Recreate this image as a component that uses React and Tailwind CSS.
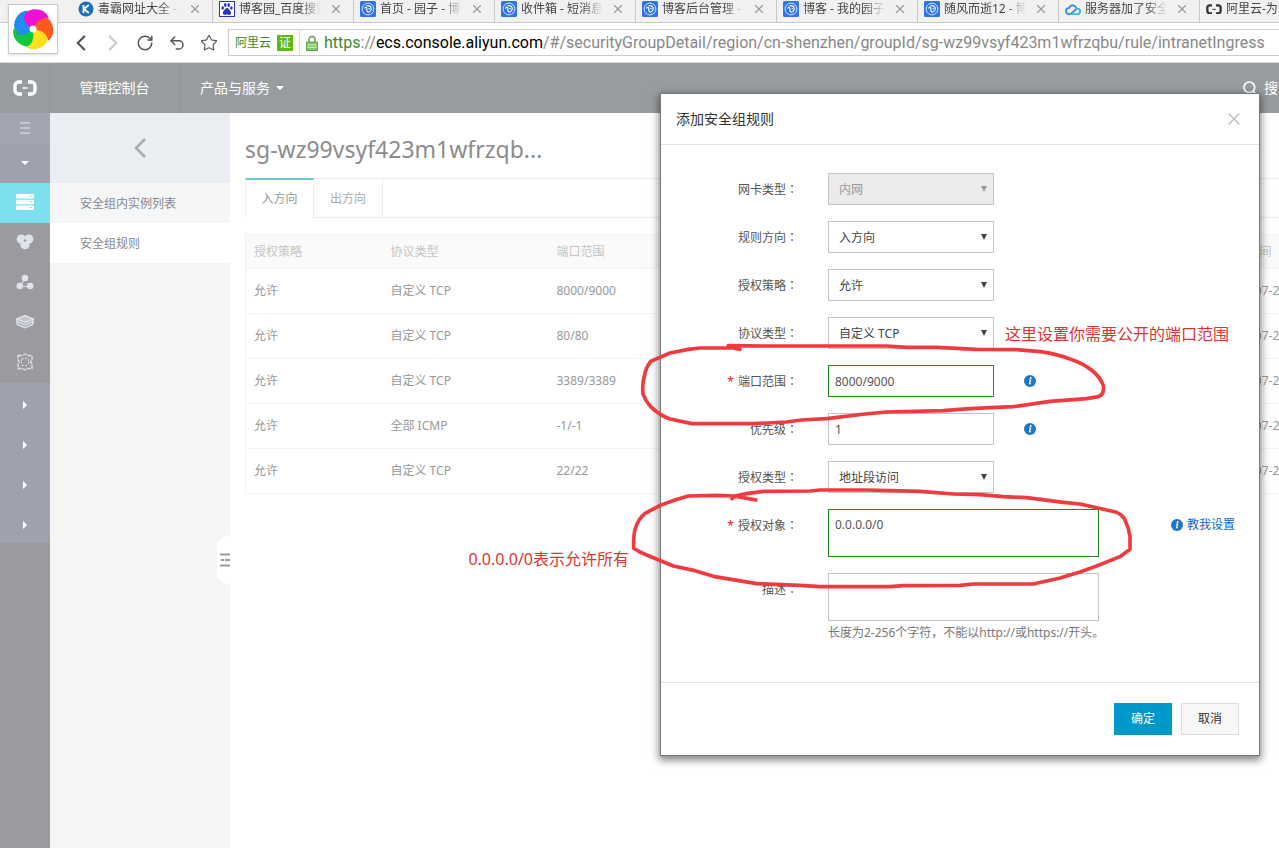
import { ChevronLeft, ChevronRight, RotateCw, Search, Star, Undo2, X } from "lucide-react";

const RULES = [
  { policy: "允许", protocol: "自定义 TCP", port: "8000/9000", created: "2017-07-27" },
  { policy: "允许", protocol: "自定义 TCP", port: "80/80", created: "2017-07-27" },
  { policy: "允许", protocol: "自定义 TCP", port: "3389/3389", created: "2017-07-27" },
  { policy: "允许", protocol: "全部 ICMP", port: "-1/-1", created: "2017-07-27" },
  { policy: "允许", protocol: "自定义 TCP", port: "22/22", created: "2017-07-27" },
];

const TABS = [
  { title: "毒霸网址大全 -", Icon: DubaIcon },
  { title: "博客园_百度搜索", Icon: BaiduIcon },
  { title: "首页 - 园子 - 博", Icon: BlogIcon },
  { title: "收件箱 - 短消息", Icon: BlogIcon },
  { title: "博客后台管理 -", Icon: BlogIcon },
  { title: "博客 - 我的园子", Icon: BlogIcon },
  { title: "随风而逝12 - 博", Icon: BlogIcon },
  { title: "服务器加了安全", Icon: CloudIcon },
  { title: "阿里云-为了", Icon: AliyunTabIcon },
];

function DubaIcon() {
  return (
    <svg viewBox="0 0 16 16" className="size-4 shrink-0">
      <circle cx="8" cy="8" r="7.5" fill="#1c6fbe" />
      <path d="M5.5 4v8M10.8 4 6 8l4.8 4" stroke="#fff" strokeWidth="1.8" fill="none" />
    </svg>
  );
}

function BaiduIcon() {
  return (
    <svg viewBox="0 0 16 16" className="size-4 shrink-0">
      <rect x=".5" y=".5" width="15" height="15" fill="#fff" stroke="#2a35c4" />
      <g fill="#2a35c4">
        <ellipse cx="3.7" cy="7" rx="1.3" ry="1.8" />
        <ellipse cx="6.3" cy="4" rx="1.3" ry="1.9" />
        <ellipse cx="9.7" cy="4" rx="1.3" ry="1.9" />
        <ellipse cx="12.4" cy="7" rx="1.3" ry="1.8" />
        <path d="M8 7c-1.6 0-2 1.5-3 2.5S3 13.5 5.2 13.7c1 .1 1.8-.3 2.8-.3s1.8.4 2.8.3c2.2-.2 1.2-3.2.2-4.2S9.600 7 8 7z" />
      </g>
    </svg>
  );
}

function BlogIcon() {
  return (
    <svg viewBox="0 0 16 16" className="size-4 shrink-0">
      <rect width="16" height="16" rx="1.5" fill="#2f74ea" />
      <circle cx="8" cy="8" r="5.9" fill="none" stroke="#d6e6ff" strokeWidth="1" />
      <path d="M4.500 7.500C5.500 5.500 7 6 6.800 8S7.500 11.500 9 11M6.500 4.800c3-.8 5 1 4.700 3.500-.2 1.500-1 2.400-2.200 2.700M8.500 7.500l1.300.3" stroke="#fff" strokeWidth="1.2" fill="none" />
    </svg>
  );
}

function CloudIcon() {
  return (
    <svg viewBox="0 0 16 16" className="size-4 shrink-0" fill="none" strokeWidth="1.7" strokeLinecap="round">
      <path d="M11 6.500A3.600 3.600 0 0 0 4.200 7 3.100 3.100 0 0 0 4 13.200c1 0 1.600-.2 2.300-.8L11.500 8" stroke="#2f7de0" />
      <path d="M6 13.200h6a2.800 2.800 0 0 0 .6-5.600c-.6-.1-1.200.1-1.700.5" stroke="#35b4e8" />
    </svg>
  );
}

function AliyunLogo({ className }) {
  return (
    <svg viewBox="0 0 24 16" className={className} fill="none" stroke="currentColor">
      <path d="M9 2H5.500A3.700 3.700 0 0 0 2 5.700v4.600A3.700 3.700 0 0 0 5.500 14H9M15 2h3.500A3.700 3.700 0 0 1 22 5.700v4.600a3.700 3.700 0 0 1-3.500 3.700H15" strokeWidth="3.4" />
      <path d="M9.500 8h5" strokeWidth="1.5" />
    </svg>
  );
}

function AliyunTabIcon() {
  return <AliyunLogo className="w-4 shrink-0 text-[#333]" />;
}

const PETALS = [
  { color: "#1e8cf0", angle: 288 },
  { color: "#12c83c", angle: 216 },
  { color: "#ffe01e", angle: 144 },
  { color: "#ff5a1e", angle: 72 },
  { color: "#f010d2", angle: 0 },
];

function BrowserLogo() {
  return (
    <div className="absolute top-1 left-2 flex size-[50px] items-center justify-center border border-[#ccc] bg-white shadow-sm">
      <svg viewBox="-22 -22 44 44" className="size-11">
        {PETALS.map((p) => (
          <path
            key={p.color}
            d="M0 0C-9-4-12-13-5-18C3-22 13-19 16-11C9-12 4-8 0 0z"
            fill={p.color}
            transform={`rotate(${p.angle})`}
          />
        ))}
        <path d="M0 0C-9-4-12-13-9-15C-6-10-3-5 0 0z" fill="#1e8cf0" transform="rotate(288)" />
        <circle r="3.5" fill="#fff" />
      </svg>
    </div>
  );
}

function ToolButton({ label, className, children }) {
  return (
    <button type="button" aria-label={label} className={`flex w-8 justify-center ${className || ""}`}>
      {children}
    </button>
  );
}

function BrowserChrome() {
  return (
    <div className="relative shrink-0">
      <div className="flex h-[23px] overflow-hidden border-b border-[#c8c8c8] bg-[#f1f1f1] pl-[72px]">
        {TABS.map(({ title, Icon }) => (
          <div
            key={title}
            className="flex h-full w-[141px] shrink-0 items-center gap-1 border-r border-[#c8c8c8] pr-2.5 pb-1 pl-1.5"
          >
            <Icon />
            <span className="min-w-0 flex-1 overflow-hidden mask-r-from-75% text-xs leading-[18px] whitespace-nowrap text-[#444]">
              {title}
            </span>
            <button type="button" aria-label="关闭标签页" className="ml-1 text-[#999]">
              <X size={14} />
            </button>
          </div>
        ))}
      </div>

      <div className="flex h-10 items-center border-b border-[#ddd] bg-white pl-[65px] text-[#555]">
        <div className="flex w-[163px] shrink-0 items-center">
          <ToolButton label="后退"><ChevronLeft size={26} /></ToolButton>
          <ToolButton label="前进" className="text-[#ccc]"><ChevronRight size={26} /></ToolButton>
          <ToolButton label="刷新"><RotateCw size={18} /></ToolButton>
          <ToolButton label="恢复"><Undo2 size={18} /></ToolButton>
          <ToolButton label="收藏"><Star size={18} strokeWidth={1.5} /></ToolButton>
        </div>
        <div className="flex h-[27px] min-w-0 flex-1 items-center overflow-hidden border border-r-0 border-[#ccc]">
          <div className="flex h-full shrink-0 items-center gap-1.5 border-r border-[#ddd] px-1.5 text-xs text-[#3c8a2e]">
            阿里云
            <span className="flex size-4 items-center justify-center bg-[#5fb910] text-xs text-white">证</span>
          </div>
          <svg viewBox="0 0 12 16" className="mx-1.5 h-4 w-3 shrink-0">
            <path d="M3 8V4.500a3 3 0 0 1 6 0V8" fill="none" stroke="#8ba37e" strokeWidth="1.8" />
            <rect x=".5" y="7" width="11" height="8.5" fill="#86c96a" stroke="#5da544" />
            <path d="M1 10h10M1 12.500h10" stroke="#c5e8b5" />
          </svg>
          <p className="font-['Roboto','Noto_Sans',sans-serif] text-base leading-6 whitespace-nowrap text-[#888]">
            <span className="text-[#3c8a2e]">https</span>://
            <span className="text-black">ecs.console.aliyun.com</span>
            /#/securityGroupDetail/region/cn-shenzhen/groupId/sg-wz99vsyf423m1wfrzqbu/rule/intranetIngress
          </p>
        </div>
      </div>
      <BrowserLogo />
    </div>
  );
}

function ConsoleHeader() {
  return (
    <header className="flex h-[50px] shrink-0 items-center bg-[#999c9f] text-sm text-white">
      <a href="#home" aria-label="阿里云" className="flex h-full w-[50px] items-center justify-center border-r border-[#93969a]">
        <AliyunLogo className="w-6" />
      </a>
      <a href="#console" className="flex h-full w-[130px] items-center justify-center border-r border-[#93969a]">
        管理控制台
      </a>
      <button type="button" className="flex h-full items-center gap-1.5 px-5">
        产品与服务
        <svg viewBox="0 0 8 4" className="h-1 w-2"><path d="M0 0h8L4 4z" fill="currentColor" /></svg>
      </button>
      <button type="button" className="ml-auto flex w-[37px] items-center gap-1.5 overflow-hidden whitespace-nowrap">
        <Search size={16} strokeWidth={2.5} className="shrink-0" />
        搜索
      </button>
    </header>
  );
}

function ServerIcon() {
  return (
    <svg viewBox="0 0 18 18" className="size-[18px]">
      <g fill="#fff">
        <rect y="1" width="18" height="4.5" rx="1" />
        <rect y="6.7" width="18" height="4.5" rx="1" />
        <rect y="12.4" width="18" height="4.5" rx="1" />
      </g>
      <path d="M14 3.200h2M14 9h2M14 14.700h2" stroke="#7ddcec" />
    </svg>
  );
}

function RdsIcon() {
  return (
    <svg viewBox="0 0 18 18" className="size-[18px]" fill="#dfe2ea">
      <circle cx="5.2" cy="6" r="4.6" />
      <circle cx="12.8" cy="6" r="4.6" />
      <circle cx="9" cy="11.5" r="4.8" />
      <circle cx="9" cy="7.5" r="1.2" fill="#9a9b9e" />
    </svg>
  );
}

function BalanceIcon() {
  return (
    <svg viewBox="0 0 18 18" className="size-[18px]" fill="#dfe2ea">
      <path d="M9 5 5 12M4 13.500h10" stroke="#dfe2ea" strokeWidth="1.2" />
      <circle cx="9" cy="5" r="3.3" />
      <circle cx="3.8" cy="13" r="3.3" />
      <circle cx="14.2" cy="13" r="3.3" />
    </svg>
  );
}

function StorageIcon() {
  return (
    <svg viewBox="0 0 18 18" className="size-[18px]" fill="none" stroke="#dfe2ea" strokeWidth="1.5">
      <path d="M1 6l8-3.500L17 6 9 9.500z" fill="#dfe2ea" fillOpacity=".6" />
      <path d="M1 8.500 9 12l8-3.500M1 11.200l8 3.500 8-3.500M1 6v5.200M17 6v5.200" />
    </svg>
  );
}

function ConfigIcon() {
  return (
    <svg viewBox="0 0 18 18" className="size-[18px]" fill="none" stroke="#dfe2ea" strokeWidth="1.4">
      <path d="M2 2.500h4.500L9 1l2.500 1.500H16V7l-1.500 2L16 11v4.500h-4.500L9 17l-2.500-1.500H2V11l1.500-2L2 7z" strokeDasharray="4 1" />
      <path d="M6 5.500h6M6 12.500h6M5.500 6v6M12.500 6v6" strokeWidth="1" strokeDasharray="2 1" />
    </svg>
  );
}

const PRODUCTS = [
  { name: "云数据库", Icon: RdsIcon },
  { name: "负载均衡", Icon: BalanceIcon },
  { name: "对象存储", Icon: StorageIcon },
  { name: "系统配置", Icon: ConfigIcon },
];

const GROUPS = ["用户中心", "安全", "监控", "运维"];

function ProductRail() {
  return (
    <nav aria-label="产品" className="flex w-[50px] shrink-0 flex-col bg-[#9b9a9e] text-white">
      <button type="button" aria-label="展开菜单" className="flex h-[30px] items-center justify-center bg-[#a3a5b0]">
        <svg viewBox="0 0 10 12" className="h-3 w-2.5"><path d="M0 1h10M0 6h10M0 11h10" stroke="#e8e9ee" /></svg>
      </button>
      <button type="button" aria-label="产品列表" className="flex h-10 items-center justify-center bg-[#9fa2ae]">
        <svg viewBox="0 0 8 4" className="h-1 w-2"><path d="M0 0h8L4 4z" fill="currentColor" /></svg>
      </button>
      <a href="#ecs" aria-label="云服务器" className="flex h-10 items-center justify-center bg-[#7de0ee] pb-0.5">
        <ServerIcon />
      </a>
      {PRODUCTS.map(({ name, Icon }) => (
        <a key={name} href="#product" aria-label={name} className="flex h-10 items-center justify-center pb-0.5">
          <Icon />
        </a>
      ))}
      {GROUPS.map((name) => (
        <button key={name} type="button" aria-label={name} className="flex h-10 items-center justify-center bg-[#9fa2ae] pt-1">
          <svg viewBox="0 0 4 8" className="h-2 w-1"><path d="M0 0l4 4-4 4z" fill="currentColor" /></svg>
        </button>
      ))}
    </nav>
  );
}

function SideMenu() {
  return (
    <aside className="relative w-[180px] shrink-0 bg-[#f5f5f5] text-xs text-[#888]">
      <button type="button" aria-label="返回" className="flex h-[70px] w-full items-center justify-center bg-[#eaedf1] text-[#aaa]">
        <svg viewBox="0 0 12 20" className="h-5 w-3"><path d="M11 1 2 10l9 9" fill="none" stroke="currentColor" strokeWidth="2.5" /></svg>
      </button>
      <a href="#instances" className="flex h-10 items-center bg-[#f4f6f8] pt-0.5 pl-[30px]">安全组内实例列表</a>
      <a href="#rules" className="flex h-10 items-center bg-white pt-0.5 pl-[30px]">安全组规则</a>
      <button
        type="button"
        aria-label="收起"
        className="absolute top-[422px] right-0 flex h-[50px] w-[13px] items-center justify-end rounded-l-full bg-white"
      >
        <svg viewBox="0 0 10 14" className="h-3.5 w-2.5"><path d="M0 1.500h10M0 12.500h10M1 7h3M5 7h5" stroke="#999" strokeWidth="1.8" /></svg>
      </button>
    </aside>
  );
}

function RulesPage() {
  return (
    <main className="min-w-0 flex-1 overflow-hidden pl-[15px] text-xs text-[#999]">
      <h1 className="flex h-[65px] items-center pt-2 text-[23px] text-[#8c8c8c]">sg-wz99vsyf423m1wfrzqb...</h1>
      <div role="tablist" className="flex h-10 border-t border-b border-[#eee]">
        <button
          role="tab"
          aria-selected="true"
          type="button"
          className="-my-px w-[69px] border-t-2 border-r border-l border-t-[#6cc5d0] border-r-[#eee] border-l-[#eee] bg-white"
        >
          入方向
        </button>
        <button role="tab" aria-selected="false" type="button" className="w-[69px] border-r border-[#eee] pt-0.5 text-[#aaa]">
          出方向
        </button>
      </div>

      <table className="mt-4 w-[1100px] table-fixed border border-[#f3f3f3] text-left">
        <thead className="bg-[#fafafa] text-[#c4c4c4]">
          <tr className="h-[34px]">
            <th className="w-[137px] px-2 font-normal">授权策略</th>
            <th className="w-[166px] px-2 font-normal">协议类型</th>
            <th className="w-[667px] px-2 font-normal">端口范围</th>
            <th className="px-2 font-normal">创建时间</th>
          </tr>
        </thead>
        <tbody>
          {RULES.map((rule) => (
            <tr key={rule.port} className="h-[45px] border-t border-[#f3f3f3]">
              <td className="px-2">{rule.policy}</td>
              <td className="px-2">{rule.protocol}</td>
              <td className="px-2">{rule.port}</td>
              <td className="px-2">{rule.created}</td>
            </tr>
          ))}
        </tbody>
      </table>
    </main>
  );
}

function Row({ id, label, required, children }) {
  return (
    <div className="mb-4 flex items-start gap-[30px]">
      <label htmlFor={id} className="h-8 w-[137px] shrink-0 text-right leading-8 text-[#555]">
        {required && <span className="mr-1 text-[#e02020]">*</span>}
        {label}
        <span className="font-['Noto_Sans_CJK_TC',sans-serif]">：</span>
      </label>
      {children}
    </div>
  );
}

function SelectRow({ id, label, value, disabled }) {
  return (
    <Row id={id} label={label}>
      <div className={`relative ${disabled ? "text-[#999]" : "text-[#444]"}`}>
        <select
          id={id}
          disabled={disabled}
          className="block h-8 w-[166px] appearance-none border border-[#c4c4c4] bg-white pt-0.5 pl-2.5 disabled:bg-[#ebebeb]"
        >
          <option>{value}</option>
        </select>
        <svg viewBox="0 0 6 6" className="pointer-events-none absolute top-[13px] right-[7px] size-1.5">
          <path d="M0 0h6L3 6z" fill="currentColor" />
        </svg>
      </div>
    </Row>
  );
}

function InfoIcon() {
  return (
    <svg viewBox="0 0 12 12" className="size-3 shrink-0">
      <circle cx="6" cy="6" r="6" fill="#2077c8" />
      <path d="M5 5h1.600l-1 3.600h1.200" fill="none" stroke="#fff" strokeWidth="1.2" />
      <circle cx="6.7" cy="3" r=".9" fill="#fff" />
    </svg>
  );
}

function RuleDialog() {
  return (
    <div
      role="dialog"
      aria-labelledby="dialog-title"
      className="absolute top-[94px] right-5 w-[598px] bg-white text-xs text-[#555] shadow-[0_0_0_1px_#777,0_3px_8px_2px_rgba(0,0,0,0.5)]"
    >
      <div className="flex h-[51px] items-center justify-between border-b border-[#e3e3e3] px-[15px]">
        <h2 id="dialog-title" className="text-sm text-[#333]">添加安全组规则</h2>
        <button type="button" aria-label="关闭" className="text-[#bbb]">
          <X size={20} strokeWidth={1.5} />
        </button>
      </div>

      <form className="pt-7 pb-[25px]">
        <SelectRow id="nic" label="网卡类型" value="内网" disabled />
        <SelectRow id="direction" label="规则方向" value="入方向" />
        <SelectRow id="policy" label="授权策略" value="允许" />
        <SelectRow id="protocol" label="协议类型" value="自定义 TCP" />
        <Row id="port" label="端口范围" required>
          <input id="port" defaultValue="8000/9000" className="h-8 w-[166px] border border-[#1d8a1d] px-1.5" />
          <span className="flex h-8 items-center"><InfoIcon /></span>
        </Row>
        <Row id="priority" label="优先级">
          <input id="priority" defaultValue="1" className="h-8 w-[166px] border border-[#c4c4c4] px-1.5" />
          <span className="flex h-8 items-center"><InfoIcon /></span>
        </Row>
        <SelectRow id="auth-type" label="授权类型" value="地址段访问" />
        <Row id="target" label="授权对象" required>
          <textarea
            id="target"
            defaultValue="0.0.0.0/0"
            className="h-12 w-[271px] resize-none border border-[#1d8a1d] px-1.5 py-[7px]"
          />
          <a href="#help" className="mr-6 ml-auto flex h-8 items-center gap-1 text-[#1166bb]">
            <InfoIcon />
            教我设置
          </a>
        </Row>
        <Row id="description" label="描述">
          <div>
            <textarea id="description" className="block h-12 w-[271px] resize-none border border-[#c4c4c4] px-1.5 py-[7px]" />
            <p className="pt-1 leading-4 text-[#777]">长度为2-256个字符，不能以http://或https://开头。</p>
          </div>
        </Row>
      </form>

      <div className="flex h-[73px] items-center justify-end gap-[9px] border-t border-[#e3e3e3] px-5">
        <button type="button" className="h-8 w-[58px] bg-[#0099cc] text-white">确定</button>
        <button type="button" className="h-8 w-[58px] border border-[#ddd] bg-[#f7f7f7] text-[#333]">取消</button>
      </div>

      <Annotations />
    </div>
  );
}

// Hand-drawn marks over the form
function Annotations() {
  return (
    <div className="pointer-events-none text-base leading-6 whitespace-nowrap text-[#dd3530]">
      <svg
        viewBox="0 0 1560 870"
        className="absolute top-[226px] -left-[41px] h-[290px] w-[520px]"
        fill="none"
        stroke="#ef3b40"
        strokeWidth="11"
        strokeLinecap="round"
        strokeLinejoin="round"
      >
        <path d="M360 88L340 84L240 84L205 88L150 99L92 124Q76 145 73 170Q66 190 69 222Q76 242 92 260Q118 286 150 297L215 311H400L500 306L545 300L620 296L735 282L800 276L970 272L1050 266L1180 260L1290 244L1400 236L1436 230Q1451 222 1450 208Q1452 198 1446 188Q1438 170 1418 153Q1390 130 1350 117Q1310 102 1260 95L1190 89L1070 88L950 82H860L800 78H430L325 77" />
        <path d="M408 540L370 533L340 528L290 526L205 528L165 540L125 554L75 580Q56 596 47 622Q40 640 41 685Q60 698 80 705L160 738L225 752L280 769L410 791L540 796L600 800H810L850 797L1020 796L1060 792H1240L1320 774L1380 756L1430 738L1500 710L1530 688V650Q1527 625 1515 600Q1508 585 1490 577L1430 563L1380 552L1330 547L1220 533L1150 530L1080 524L1000 522L900 514L740 510H600L570 513L430 514L380 521L345 528L336 536" />
      </svg>
      <p className="absolute top-[228px] left-[344px]">这里设置你需要公开的端口范围</p>
      <p className="absolute top-[453px] right-full mr-8">0.0.0.0/0表示允许所有</p>
    </div>
  );
}

export default function App() {
  return (
    <div className="relative flex min-h-screen flex-col overflow-hidden bg-white font-['Noto_Sans','Noto_Sans_CJK_SC',sans-serif]">
      <BrowserChrome />
      <ConsoleHeader />
      <div className="flex flex-1">
        <ProductRail />
        <SideMenu />
        <RulesPage />
      </div>
      <RuleDialog />
    </div>
  );
}
